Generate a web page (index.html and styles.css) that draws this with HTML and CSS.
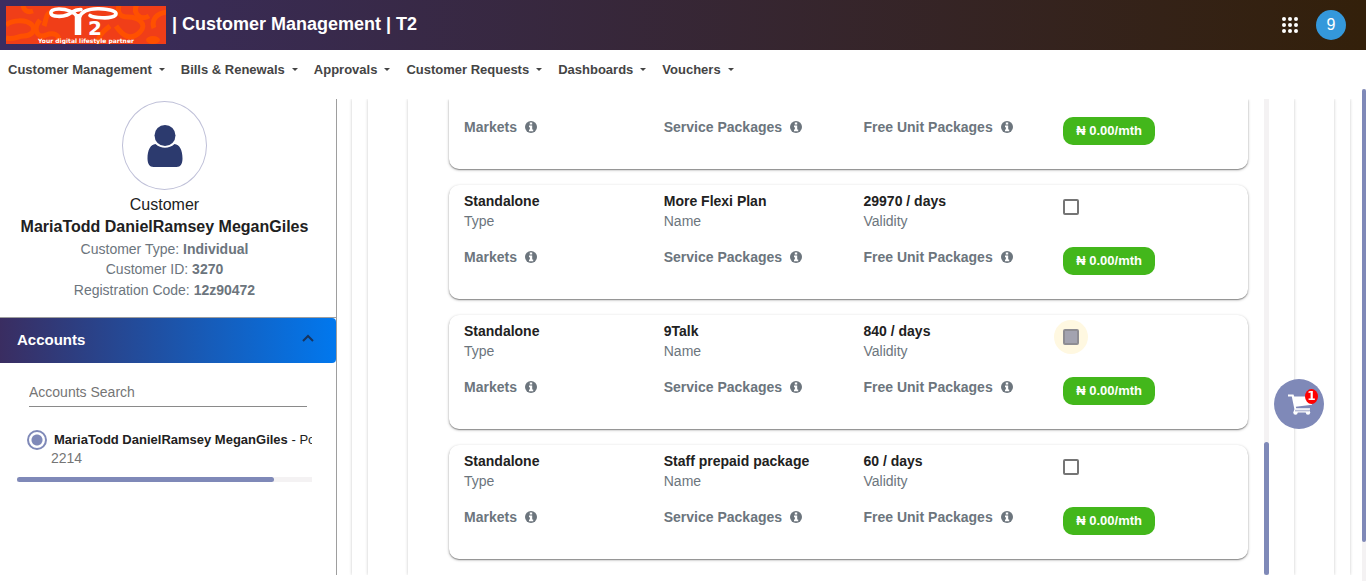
FILE: index.html
```html
<!DOCTYPE html>
<html lang="en">
<head>
<meta charset="utf-8">
<title>Customer Management | T2</title>
<meta name="viewport" content="width=device-width, initial-scale=1">
<link rel="stylesheet" href="styles.css">
</head>
<body>
<svg class="defs" aria-hidden="true">
  <symbol id="info" viewBox="0 0 12 12">
    <circle cx="6" cy="6" r="6"/>
    <path fill="#fff" d="M4.800 1.600h2.400v2H4.800zM4 4.600H7.200V8.500H8.200V10.200H4V8.500H4.900V6.200H4z"/>
  </symbol>
</svg>

<header class="topbar">
  <svg class="logo" viewBox="0 0 160 38" role="img" aria-label="T2">
    <rect width="160" height="38" fill="#f03e18"/>
    <g fill="none" stroke="#ff5000" stroke-width="5">
      <path d="M0 19c6-5 20-6 26 0 5 6-2 11-8 11-7 0-9 4-18 2"/>
      <path d="M17-2c0 6 4 9 10 7M38 20c3-8 1-14 10-14M34 14c-8 10-2 19 6 15 8-3 14 0 12 6"/>
      <path d="M92 42c-2-10 4-16 12-22M110 20c8 12 16 14 24 6 8-8-2-15-12-15-8 0-11-4-9-12"/>
      <path d="M131-2c-5 10 4 17 12 12M148 22c-3-8 2-15 14-16"/>
    </g>
    <ellipse cx="147" cy="34" rx="7" ry="4" fill="#ff5000"/>
    <g fill="none" stroke="#fff" stroke-linecap="round">
      <path stroke-width="3.600" d="M72 11C67 5 60 3 53 3 47 3 44.500 5 45 7.500c1 3.500 11 3.500 16 1.500 5-2 6-5.500 14-5.500"/>
      <path stroke-width="3.600" d="M73 12c2-6 9-9.500 20-9.200 10 .3 17 2.200 17 5 0 3-7 4.500-14 4-5-.2-10-.8-12-2.300"/>
      <path stroke-width="6.500" stroke-linecap="butt" d="M72 8v21"/>
    </g>
    <text x="82" y="29" class="logo-digit">2</text>
    <text x="80" y="37" class="logo-line">Your digital lifestyle partner</text>
  </svg>
  <h1 class="title">| Customer Management | T2</h1>
  <button class="apps" type="button" aria-label="Applications">
    <svg viewBox="0 0 16 16" width="16" height="16" fill="#fff"><circle cx="2" cy="2" r="2"/><circle cx="8" cy="2" r="2"/><circle cx="14" cy="2" r="2"/><circle cx="2" cy="8" r="2"/><circle cx="8" cy="8" r="2"/><circle cx="14" cy="8" r="2"/><circle cx="2" cy="14" r="2"/><circle cx="8" cy="14" r="2"/><circle cx="14" cy="14" r="2"/></svg>
  </button>
  <button class="avatar" type="button">9</button>
</header>

<nav class="menu">
  <a class="menu-link" href="#">Customer Management</a>
  <a class="menu-link" href="#">Bills &amp; Renewals</a>
  <a class="menu-link" href="#">Approvals</a>
  <a class="menu-link" href="#">Customer Requests</a>
  <a class="menu-link" href="#">Dashboards</a>
  <a class="menu-link" href="#">Vouchers</a>
</nav>

<div class="workspace">
  <aside class="sidebar">
    <section class="profile">
      <div class="portrait">
        <svg viewBox="0 0 36 42" width="36" height="42" fill="#2c3a6e"><circle cx="18" cy="10.500" r="10.500"/><path d="M8.500 19c5.500 5 13.500 5 19 0 5 .5 8 6 8 14.500 0 5-2 8.500-6 8.500h-23c-4 0-6-3.500-6-8.500C.5 25 3.500 19.500 8.500 19z"/></svg>
      </div>
      <p class="role">Customer</p>
      <h2 class="name">MariaTodd DanielRamsey MeganGiles</h2>
      <p class="fact">Customer Type: <b>Individual</b></p>
      <p class="fact">Customer ID: <b>3270</b></p>
      <p class="fact">Registration Code: <b>12z90472</b></p>
    </section>
    <button class="accordion" type="button" aria-expanded="true">Accounts
      <svg viewBox="0 0 12 8" width="12" height="8" fill="none" stroke="#17345f" stroke-width="2"><path d="M1 7l5-5 5 5"/></svg>
    </button>
    <div class="accounts">
      <input class="search" type="text" placeholder="Accounts Search" aria-label="Accounts Search">
      <label class="account">
        <input class="radio" type="radio" name="account" checked>
        <span class="account-name"><b>MariaTodd DanielRamsey MeganGiles</b> - Postpaid</span>
      </label>
      <p class="account-id">2214</p>
      <div class="hbar"><div class="hbar-thumb"></div></div>
    </div>
  </aside>

  <main class="content">
    <div class="panel panel-outer"><div class="panel panel-middle"><div class="panel panel-inner">
      <div class="plans">
        <article class="card card-cut">
          <div class="row row-links">
            <span class="link">Markets <svg class="info"><use href="#info"/></svg></span>
            <span class="link">Service Packages <svg class="info"><use href="#info"/></svg></span>
            <span class="link">Free Unit Packages <svg class="info"><use href="#info"/></svg></span>
            <span class="cell"><span class="price">₦ 0.00/mth</span></span>
          </div>
        </article>
        <article class="card">
          <div class="row row-facts">
            <div class="cell"><b>Standalone</b><span>Type</span></div>
            <div class="cell"><b>More Flexi Plan</b><span>Name</span></div>
            <div class="cell"><b>29970 / days</b><span>Validity</span></div>
            <div class="pick"><input class="check" type="checkbox" aria-label="More Flexi Plan"></div>
          </div>
          <div class="row row-links">
            <span class="link">Markets <svg class="info"><use href="#info"/></svg></span>
            <span class="link">Service Packages <svg class="info"><use href="#info"/></svg></span>
            <span class="link">Free Unit Packages <svg class="info"><use href="#info"/></svg></span>
            <span class="cell"><span class="price">₦ 0.00/mth</span></span>
          </div>
        </article>
        <article class="card">
          <div class="row row-facts">
            <div class="cell"><b>Standalone</b><span>Type</span></div>
            <div class="cell"><b>9Talk</b><span>Name</span></div>
            <div class="cell"><b>840 / days</b><span>Validity</span></div>
            <div class="pick"><input class="check check-active" type="checkbox" aria-label="9Talk"></div>
          </div>
          <div class="row row-links">
            <span class="link">Markets <svg class="info"><use href="#info"/></svg></span>
            <span class="link">Service Packages <svg class="info"><use href="#info"/></svg></span>
            <span class="link">Free Unit Packages <svg class="info"><use href="#info"/></svg></span>
            <span class="cell"><span class="price">₦ 0.00/mth</span></span>
          </div>
        </article>
        <article class="card">
          <div class="row row-facts">
            <div class="cell"><b>Standalone</b><span>Type</span></div>
            <div class="cell"><b>Staff prepaid package</b><span>Name</span></div>
            <div class="cell"><b>60 / days</b><span>Validity</span></div>
            <div class="pick"><input class="check" type="checkbox" aria-label="Staff prepaid package"></div>
          </div>
          <div class="row row-links">
            <span class="link">Markets <svg class="info"><use href="#info"/></svg></span>
            <span class="link">Service Packages <svg class="info"><use href="#info"/></svg></span>
            <span class="link">Free Unit Packages <svg class="info"><use href="#info"/></svg></span>
            <span class="cell"><span class="price">₦ 0.00/mth</span></span>
          </div>
        </article>
      </div>
      <div class="vbar vbar-list"><div class="vbar-thumb"></div></div>
    </div></div></div>
  </main>
  <div class="vbar vbar-page"><div class="vbar-thumb"></div></div>
</div>

<button class="cart" type="button" aria-label="Cart">
  <svg viewBox="0 0 24 22" width="24" height="22" fill="#fff"><path d="M0 .5h5.500l.7 2H24v8.200L7.800 12.800l.4 1.400H22v1.600H6.500L3.800 2.500H0z"/><path d="M6 15.500h15.500v3H6z"/><circle cx="7.500" cy="18.500" r="2.200"/><circle cx="20" cy="18.500" r="2.200"/><path stroke="#7f89b8" stroke-width=".8" d="M7 16.800h14.500"/></svg>
  <span class="count">1</span>
</button>
</body>
</html>
```

FILE: styles.css
```css
* { box-sizing: border-box; }

body {
  margin: 0;
  height: 100vh;
  display: flex;
  flex-direction: column;
  overflow: hidden;
  background: #fff;
  color: #212121;
  font-family: "Liberation Sans", Arial, sans-serif;
  font-size: 14px;
  line-height: 20px;
}

p, h1, h2 { margin: 0; }
button { border: 0; padding: 0; font-family: inherit; cursor: pointer; }
.defs { display: none; }

/* Top bar */
.topbar {
  flex: none;
  display: flex;
  align-items: center;
  height: 50px;
  padding: 0 20px 0 6px;
  background: linear-gradient(90deg, #3a2d61, #33200a);
}
.logo { width: 160px; height: 38px; }
.logo-digit { fill: #fff; font: bold 20px "DejaVu Sans", sans-serif; }
.logo-line { fill: #fff; font: bold 6px "DejaVu Sans", sans-serif; text-anchor: middle; }
.title {
  margin: 0 auto 2px 6px;
  color: #fff;
  font-size: 18px;
  line-height: 24px;
}
.apps { display: flex; margin-right: 18px; background: none; }
.avatar {
  width: 30px;
  height: 30px;
  border-radius: 50%;
  background: #3498db;
  color: #fff;
  font-size: 16px;
}

/* Menu */
.menu {
  flex: none;
  display: flex;
  gap: 16px;
  height: 39px;
  padding: 0 8px;
  align-items: center;
}
.menu-link {
  display: flex;
  align-items: center;
  gap: 7px;
  color: #444;
  font-size: 13px;
  font-weight: bold;
  text-decoration: none;
}
.menu-link::after {
  content: "";
  border: 3px solid transparent;
  border-top-color: #444;
  border-bottom: 0;
}

/* Layout */
.workspace { flex: 1; display: flex; min-height: 0; }

.sidebar {
  flex: none;
  width: 337px;
  margin: 10px 0 6px;
  border-right: 1px solid #9e9e9e;
}
.profile {
  padding: 2px 7px 17px 0;
  border-bottom: 1px solid #9e9e9e;
  text-align: center;
}
.portrait {
  display: flex;
  align-items: center;
  justify-content: center;
  width: 85px;
  height: 89px;
  margin: 0 auto 5px;
  border: 1px solid #bfc0d8;
  border-radius: 50%;
}
.role { font-size: 16px; }
.name { margin: 1px 0; font-size: 16px; line-height: 22px; }
.fact { color: #6c757d; }
.fact:last-child { margin-top: 1px; }

.accordion {
  display: flex;
  align-items: center;
  justify-content: space-between;
  width: 100%;
  height: 45px;
  padding: 0 22px 2px 17px;
  border-radius: 0 4px 4px 0;
  background: linear-gradient(90deg, #3a2d61, #0178ee);
  color: #fff;
  font-size: 15px;
  font-weight: bold;
}
.accordion svg { margin-bottom: 4px; }
.accounts { margin: 19px 24px 0 17px; overflow: hidden; }
.search {
  display: block;
  width: calc(100% - 17px);
  height: 25px;
  margin-left: 12px;
  padding: 0 0 5px;
  border: 0;
  border-bottom: 1px solid #8a8a8a;
  background: none;
  font: inherit;
}
.search::placeholder { color: #757575; opacity: 1; }
.account { display: flex; align-items: center; margin-top: 23px; padding-left: 10px; }
.radio {
  flex: none;
  appearance: none;
  width: 20px;
  height: 20px;
  margin: 0 7px 0 0;
  border: 2px solid #7f89b8;
  border-radius: 50%;
  background: radial-gradient(circle, #7f89b8 5px, transparent 6px);
}
.account-name { font-size: 13px; white-space: nowrap; }
.account-id { padding-left: 34px; line-height: 16px; color: #757575; }
.hbar { height: 5px; margin-top: 11px; background: #f4f2f3; }
.hbar-thumb { width: 87%; height: 5px; border-radius: 3px; background: #7f89b8; }

/* Nested panels */
.content {
  flex: 1;
  min-width: 0;
  margin: 10px 0 6px;
  padding: 0 12px 0 15px;
  display: flex;
  overflow: hidden;
}
.panel { flex: 1; min-width: 0; display: flex; box-shadow: 0 0 3px rgba(0, 0, 0, .22); }
.panel-outer { padding: 0 16px; }
.panel-middle { padding: 0 40px; }
.panel-inner { padding: 0 25px 0 36px; }

.plans {
  flex: 1;
  display: flex;
  flex-direction: column;
  gap: 16px;
  padding: 0 16px 0 5px;
  overflow: hidden;
}
.vbar { flex: none; background: #f4f2f3; }
.vbar-thumb { border-radius: 3px; background: #7f89b8; }
.vbar-list { display: flex; align-items: flex-end; width: 5px; }
.vbar-list .vbar-thumb { width: 5px; height: 28%; }
.vbar-page { width: 4px; }
.vbar-page .vbar-thumb { height: 92%; }

/* Plan cards */
.card {
  flex: none;
  padding: 6px 0 24px;
  border-radius: 10px;
  background: #fff;
  box-shadow: 0 1px 1px rgba(0, 0, 0, .3), 0 1px 3px rgba(0, 0, 0, .3);
}
.card-cut { padding-top: 18px; border-radius: 0 0 10px 10px; }
.row { display: grid; grid-template-columns: repeat(4, 1fr); }
.row > * { padding: 0 15px; }
.row-facts { height: 56px; }
.cell b, .cell span { display: block; }
.cell > span { color: #6c757d; }
.pick { align-self: start; display: flex; isolation: isolate; }
.row > .pick { padding-top: 8px; }
.check {
  appearance: none;
  width: 16px;
  height: 16px;
  margin: 0;
  border: 2px solid #757575;
  border-radius: 2px;
}
.check-active {
  border-color: #8e8d93;
  background: #a3a3b0;
  position: relative;
}
.check-active::before {
  content: "";
  position: absolute;
  z-index: -1;
  inset: -11px;
  border-radius: 50%;
  background: #fff8e1;
}
.link {
  display: flex;
  align-items: center;
  gap: 8px;
  height: 20px;
  color: #6c757d;
  font-weight: bold;
}
.info { width: 12px; height: 12px; fill: #6c757d; }
.cell > .price {
  width: fit-content;
  padding: 0 13px;
  border-radius: 10px;
  background: #43b71b;
  color: #fff;
  font-size: 13px;
  font-weight: bold;
  line-height: 28px;
}

/* Cart */
.cart {
  position: fixed;
  right: 42px;
  top: 379px;
  width: 50px;
  height: 50px;
  padding: 4px 0 0 1px;
  border-radius: 50%;
  background: #7f89b8;
}
.count {
  position: absolute;
  right: 6px;
  top: 10px;
  width: 13px;
  height: 15px;
  border-radius: 50%;
  background: #f00;
  color: #fff;
  font: bold 12px/15px "DejaVu Sans", sans-serif;
  text-align: center;
}
```
